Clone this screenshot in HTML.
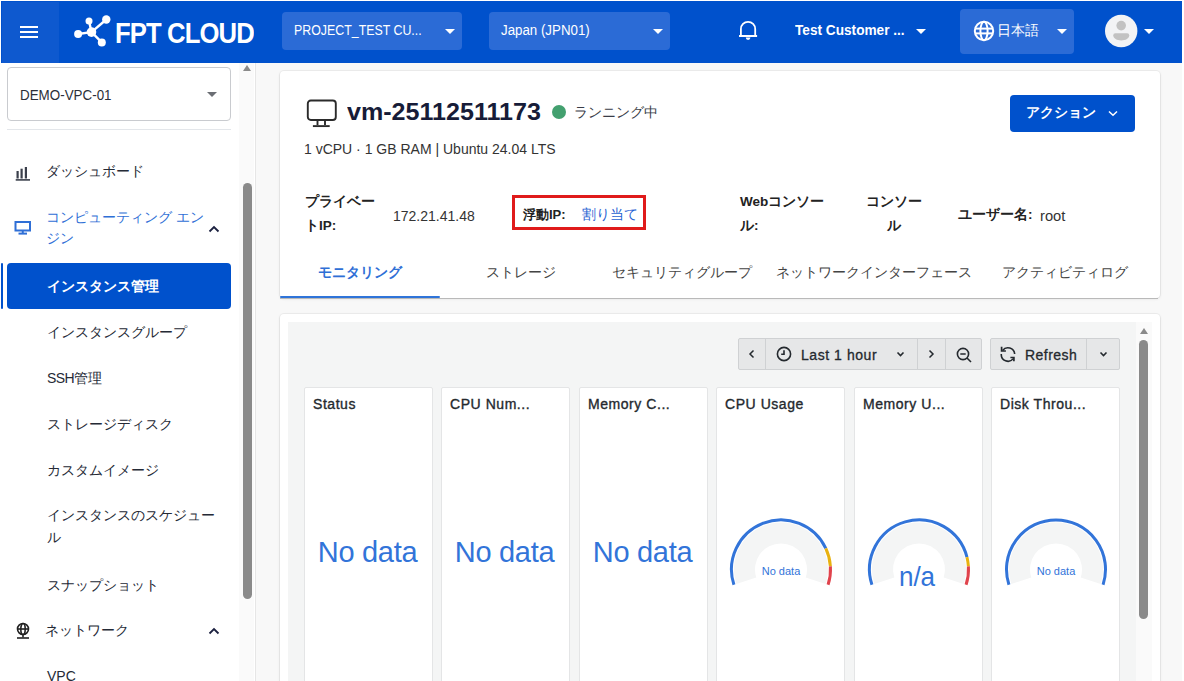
<!DOCTYPE html>
<html lang="ja">
<head>
<meta charset="utf-8">
<style>
*{box-sizing:border-box;margin:0;padding:0}
html,body{width:1184px;height:681px;overflow:hidden;background:#fff;font-family:"Liberation Sans",sans-serif;color:#333}
.a{position:absolute;white-space:nowrap}
.t{line-height:1}
#hdr{position:absolute;left:1px;top:1px;width:1181px;height:62px;background:#0051cc;z-index:5}
#ham{position:absolute;left:0;top:0;width:58px;height:62px;background:#0e59cf;border-top:1px solid #0051cc;border-left:1px solid #0051cc}
.hl{position:absolute;left:17.5px;width:18px;height:2px;background:#fff}
.dd{position:absolute;background:#2b6bd6;border-radius:4px}
.tri{position:absolute;width:0;height:0;border-left:5px solid transparent;border-right:5px solid transparent;border-top:5px solid #fff}
.w{color:#fff}
#side{position:absolute;left:0;top:62px;width:255px;height:619px;background:#fff;z-index:2}
#main{position:absolute;left:255px;top:62px;width:927px;height:619px;background:#f8f8f8}
.card{position:absolute;background:#fff;border-radius:4px;box-shadow:0 0 0 1px rgba(0,0,0,.045),0 1px 3px rgba(0,0,0,.1)}
.nav{position:absolute;left:47px;font-size:14px;line-height:1;color:#252a36}
.panel{position:absolute;top:387px;width:129px;height:300px;background:#fff;border:1px solid #e4e5e6;border-radius:2px}
.ptitle{position:absolute;left:8px;top:9.2px;font-size:14px;line-height:1;color:#24292e;-webkit-text-stroke:0.35px #24292e;letter-spacing:0.55px}
.nodata{position:absolute;left:-1px;width:100%;text-align:center;top:150px;font-size:29px;line-height:1;color:#3274d9;letter-spacing:-0.3px}
.btn{position:absolute;background:#e6e7e8;border:1px solid #cfd1d3;border-radius:2px}
</style>
</head>
<body>
<!-- HEADER -->
<div id="hdr">
  <div id="ham">
    <div class="hl" style="top:23.5px"></div>
    <div class="hl" style="top:28.5px"></div>
    <div class="hl" style="top:33.5px"></div>
  </div>
  <svg class="a" style="left:71px;top:13px" width="40" height="34" viewBox="0 0 40 34">
    <g stroke="#fff" stroke-width="2.4" fill="none">
      <line x1="19.5" y1="18.1" x2="6.1" y2="20.05"/>
      <line x1="19.5" y1="18.1" x2="17" y2="6.9"/>
      <line x1="19.5" y1="18.1" x2="34.3" y2="5.5"/>
      <line x1="19.5" y1="18.1" x2="29.8" y2="28.4"/>
    </g>
    <g fill="#fff">
      <circle cx="19.5" cy="18.1" r="4.8"/>
      <circle cx="6.1" cy="20.05" r="4"/>
      <circle cx="17" cy="6.9" r="3.5"/>
      <circle cx="34.3" cy="5.5" r="4.2"/>
      <circle cx="29.8" cy="28.4" r="4"/>
    </g>
  </svg>
  <div class="a t w" style="left:114px;top:18px;font-size:29px;font-weight:bold;letter-spacing:-1px;transform:scaleX(0.885);transform-origin:0 0">FPT CLOUD</div>

  <div class="dd" style="left:281px;top:11px;width:180px;height:38px"></div>
  <div class="a t w" style="left:293px;top:22px;font-size:14px;transform:scaleX(0.884);transform-origin:0 0">PROJECT_TEST CU...</div>
  <div class="tri" style="left:444px;top:28px"></div>

  <div class="dd" style="left:488px;top:11px;width:181px;height:38px"></div>
  <div class="a t w" style="left:500px;top:22px;font-size:14px;transform:scaleX(0.95);transform-origin:0 0">Japan (JPN01)</div>
  <div class="tri" style="left:652px;top:28px"></div>

  <svg class="a" style="left:736px;top:18px" width="22" height="22" viewBox="0 0 22 22">
    <path d="M3.9 17 V9.95 a7.15 7.15 0 0 1 14.3 0 V17" stroke="#fff" stroke-width="1.8" fill="none"/>
    <path d="M2 17 H20.1" stroke="#fff" stroke-width="2" fill="none"/>
    <path d="M8.8 18.6 H13.4 A2.3 2.3 0 0 1 8.8 18.6 Z" fill="#fff"/>
  </svg>
  <div class="a t w" style="left:794px;top:20.5px;font-size:15.5px;font-weight:bold;transform:scaleX(0.88);transform-origin:0 0">Test Customer ...</div>
  <div class="tri" style="left:915px;top:28px"></div>

  <div class="dd" style="left:959px;top:8px;width:114px;height:45px"></div>
  <svg class="a" style="left:972px;top:19px" width="22" height="22" viewBox="0 0 22 22">
    <g stroke="#fff" stroke-width="2" fill="none">
      <circle cx="11" cy="11" r="9.2"/>
      <ellipse cx="11" cy="11" rx="3.6" ry="9.2"/>
      <line x1="2" y1="8.6" x2="20" y2="8.6"/>
      <line x1="2" y1="13.4" x2="20" y2="13.4"/>
    </g>
  </svg>
  <div class="a t w" style="left:996px;top:22px;font-size:14px">日本語</div>
  <div class="tri" style="left:1056px;top:28px"></div>

  <svg class="a" style="left:1104px;top:13px" width="34" height="34" viewBox="0 0 34 34">
    <circle cx="16.2" cy="17" r="16.2" fill="#f2f3f5"/>
    <circle cx="16.2" cy="11.6" r="4.8" fill="#c2c2c2"/>
    <path d="M10.3 19.2 H22.2 A2 2 0 0 1 24.2 21.2 C24.2 24.5 20.6 26.4 16.25 26.4 C11.9 26.4 8.3 24.5 8.3 21.2 A2 2 0 0 1 10.3 19.2 Z" fill="#c2c2c2"/>
  </svg>
  <div class="tri" style="left:1143px;top:28px"></div>
</div>

<!-- SIDEBAR -->
<div id="side">
  <div class="a" style="left:7px;top:5px;width:224px;height:54px;border:1px solid #c9cbcf;border-radius:4px"></div>
  <div class="a t" style="left:20px;top:25px;font-size:15px;color:#2b2f38;transform:scaleX(0.893);transform-origin:0 0">DEMO-VPC-01</div>
  <div class="a" style="left:207px;top:30px;width:0;height:0;border-left:5px solid transparent;border-right:5px solid transparent;border-top:5px solid #6b6e74"></div>
  <div class="a" style="left:7px;top:67px;width:224px;height:1px;background:#e3e6ea"></div>

  <svg class="a" style="left:14px;top:104px" width="18" height="16" viewBox="0 0 18 15">
    <g fill="#3a3f4b"><rect x="2.5" y="4.5" width="2.2" height="7.5"/><rect x="6.5" y="2.2" width="2.2" height="9.8"/><rect x="10.8" y="0.5" width="2.2" height="11.5"/><rect x="1.7" y="12.6" width="14.3" height="1.6"/></g>
  </svg>
  <div class="nav" style="left:46px;top:101.5px">ダッシュボード</div>

  <svg class="a" style="left:13px;top:157px" width="20" height="16" viewBox="0 0 20 16">
    <g stroke="#2f6fd6" stroke-width="2" fill="none"><rect x="2.5" y="3" width="14.5" height="8.5"/><line x1="9.75" y1="11.5" x2="9.75" y2="14"/><line x1="5.5" y1="14.6" x2="14" y2="14.6"/></g>
  </svg>
  <div class="nav" style="left:46px;top:144.5px;color:#2f6fd6;line-height:21.5px">コンピューティング エン<br>ジン</div>
  <svg class="a" style="left:208px;top:162.5px" width="12" height="8" viewBox="0 0 12 8"><path d="M1.5 6.5 L6 2 L10.5 6.5" stroke="#1c2140" stroke-width="1.8" fill="none"/></svg>

  <div class="a" style="left:1px;top:200.5px;width:1.7px;height:46.3px;background:#0051cc;border-radius:1px"></div>
  <div class="a" style="left:7px;top:201px;width:224px;height:46px;background:#0051cc;border-radius:4px"></div>
  <div class="nav" style="top:217px;color:#fff;font-weight:bold">インスタンス管理</div>
  <div class="nav" style="top:263px">インスタンスグループ</div>
  <div class="nav" style="top:309px"><span style="letter-spacing:-0.6px">SSH</span>管理</div>
  <div class="nav" style="top:355px">ストレージディスク</div>
  <div class="nav" style="top:401px">カスタムイメージ</div>
  <div class="nav" style="top:443px;line-height:21.5px">インスタンスのスケジュー<br>ル</div>
  <div class="nav" style="top:516px">スナップショット</div>
  <svg class="a" style="left:14px;top:560px" width="18" height="18" viewBox="0 0 18 18">
    <g stroke="#222" stroke-width="1.6" fill="none"><circle cx="9" cy="7" r="5.5"/><ellipse cx="9" cy="7" rx="2.2" ry="5.5"/><line x1="3.5" y1="7" x2="14.5" y2="7"/><line x1="9" y1="12.5" x2="9" y2="15.5"/><line x1="3" y1="16" x2="15" y2="16"/></g>
  </svg>
  <div class="nav" style="left:45px;top:561px">ネットワーク</div>
  <svg class="a" style="left:207.5px;top:565px" width="12" height="8" viewBox="0 0 12 8"><path d="M1.5 6.5 L6 2 L10.5 6.5" stroke="#1c2140" stroke-width="1.8" fill="none"/></svg>
  <div class="nav" style="top:606.5px">VPC</div>

  <div class="a" style="left:239px;top:0;width:15px;height:619px;background:#fafafa"></div>
  <div class="a" style="left:255px;top:0;width:1px;height:619px;background:#e6e6e6"></div>
  <div class="a" style="left:243px;top:3px;width:0;height:0;border-left:4.5px solid transparent;border-right:4.5px solid transparent;border-bottom:6px solid #8a8a8a"></div>
  <div class="a" style="left:242.5px;top:120.5px;width:9px;height:416.5px;background:#8a8a8a;border-radius:5px"></div>
</div>

<!-- MAIN -->
<div id="main">
  <div class="card" style="left:25px;top:9px;width:880px;height:227px">
  </div>
  <div class="card" style="left:25px;top:252px;width:880px;height:400px">
  </div>
</div>

<!-- CARD1 CONTENT (page coords) -->
<div id="c1">
  <svg class="a" style="left:305px;top:98px" width="32" height="30" viewBox="0 0 32 30">
    <g stroke="#2b2b2b" stroke-width="1.9" fill="none" stroke-linejoin="round"><rect x="2.8" y="2.5" width="28" height="19.5" rx="3"/><line x1="12.5" y1="22" x2="12.5" y2="27"/><line x1="20" y1="22" x2="20" y2="27"/><line x1="7.9" y1="28.1" x2="24.7" y2="28.1"/></g>
  </svg>
  <div class="a t" style="left:347px;top:100px;font-size:24px;font-weight:bold;color:#171c38;transform:scaleX(1.045);transform-origin:0 0">vm-25112511173</div>
  <div class="a" style="left:552px;top:105px;width:14px;height:14px;border-radius:50%;background:#43a06f"></div>
  <div class="a t" style="left:574px;top:105px;font-size:14px;color:#3a3d48">ランニング中</div>
  <div class="a t" style="left:304px;top:142px;font-size:14px;color:#333">1 vCPU · 1 GB RAM | Ubuntu 24.04 LTS</div>

  <div class="a" style="left:305px;top:190px;font-size:13.5px;line-height:24px;font-weight:bold;color:#222">プライベー<br>トIP:</div>
  <div class="a t" style="left:393px;top:209px;font-size:14px;color:#333">172.21.41.48</div>
  <div class="a" style="left:511.5px;top:195px;width:134px;height:34.5px;border:3.6px solid #e01b1b"></div>
  <div class="a t" style="left:523px;top:208px;font-size:13px;font-weight:bold;color:#222">浮動IP:</div>
  <div class="a t" style="left:582px;top:207.3px;font-size:14px;color:#1f62d2">割り当て</div>

  <div class="a" style="left:740px;top:190px;font-size:13.5px;line-height:24px;font-weight:bold;color:#222">Webコンソー<br>ル:</div>
  <div class="a" style="left:866px;top:190px;font-size:13.5px;line-height:24px;font-weight:bold;color:#222;text-align:center">コンソー<br>ル</div>
  <div class="a t" style="left:958px;top:208px;font-size:13.5px;font-weight:bold;color:#222">ユーザー名:</div>
  <div class="a t" style="left:1040px;top:209px;font-size:14px;color:#333;transform:scaleX(1.05);transform-origin:0 0">root</div>

  <div class="a" style="left:1010px;top:95px;width:125px;height:37px;background:#0051cc;border-radius:4px"></div>
  <div class="a t w" style="left:1026.3px;top:105px;font-size:14px;font-weight:bold">アクション</div>
  <svg class="a" style="left:1106px;top:108px" width="14" height="10" viewBox="0 0 14 10"><path d="M3 3.5 L7 7.3 L11 3.5" stroke="#fff" stroke-width="1.5" fill="none"/></svg>

  <div class="a t" style="left:318px;top:265px;font-size:14px;font-weight:bold;color:#2f6fd6">モニタリング</div>
  <div class="a t" style="left:486px;top:265px;font-size:14px;color:#444">ストレージ</div>
  <div class="a t" style="left:612px;top:265px;font-size:14px;color:#444">セキュリティグループ</div>
  <div class="a t" style="left:776px;top:265px;font-size:14px;color:#444">ネットワークインターフェース</div>
  <div class="a t" style="left:1002px;top:265px;font-size:14px;color:#444">アクティビティログ</div>
  <div class="a" style="left:280px;top:297.5px;width:878px;height:1px;background:#b9b9b9"></div>
  <div class="a" style="left:279.5px;top:296px;width:160.5px;height:2.2px;background:#2f74d9;border-radius:1px"></div>
</div>

<!-- CARD2 CONTENT -->
<div id="c2">
  <div class="a" style="left:287.5px;top:322px;width:848.5px;height:360px;background:#f4f5f5"></div>

  <div class="btn" style="left:738px;top:338px;width:244px;height:32px"></div>
  <div class="a" style="left:765px;top:338px;width:1px;height:32px;background:#cfd1d3"></div>
  <div class="a" style="left:917px;top:338px;width:1px;height:32px;background:#cfd1d3"></div>
  <div class="a" style="left:945px;top:338px;width:1px;height:32px;background:#cfd1d3"></div>
  <svg class="a" style="left:747px;top:348px" width="10" height="12" viewBox="0 0 10 12"><path d="M6.5 2.5 L3 6 L6.5 9.5" stroke="#24292e" stroke-width="1.5" fill="none"/></svg>
  <svg class="a" style="left:776px;top:346px" width="16" height="16" viewBox="0 0 16 16"><circle cx="8" cy="8" r="6.6" stroke="#24292e" stroke-width="1.6" fill="none"/><path d="M8 4.2 V8.3 H5.2" stroke="#24292e" stroke-width="1.6" fill="none"/></svg>
  <div class="a t" style="left:801px;top:348px;font-size:14px;color:#24292e;letter-spacing:0.55px;-webkit-text-stroke:0.3px #24292e">Last 1 hour</div>
  <svg class="a" style="left:895px;top:349px" width="11" height="10" viewBox="0 0 11 10"><path d="M2.5 3.5 L5.5 6.5 L8.5 3.5" stroke="#24292e" stroke-width="1.6" fill="none"/></svg>
  <svg class="a" style="left:926px;top:348px" width="10" height="12" viewBox="0 0 10 12"><path d="M3.5 2.5 L7 6 L3.5 9.5" stroke="#24292e" stroke-width="1.5" fill="none"/></svg>
  <svg class="a" style="left:956px;top:347px" width="17" height="16" viewBox="0 0 17 16"><circle cx="7" cy="7" r="5.6" stroke="#24292e" stroke-width="1.6" fill="none"/><path d="M4.3 7 H9.7 M11 11 L15 15" stroke="#24292e" stroke-width="1.6" fill="none"/></svg>

  <div class="btn" style="left:990px;top:338px;width:130px;height:32px"></div>
  <div class="a" style="left:1086px;top:338px;width:1px;height:32px;background:#cfd1d3"></div>
  <svg class="a" style="left:999px;top:346px" width="18" height="17" viewBox="0 0 18 17"><path d="M3.58 4.56 A6.7 6.7 0 0 1 15.68 8.03 M2.3 8.0 A6.7 6.7 0 0 0 14.28 12.62" stroke="#24292e" stroke-width="1.6" fill="none"/><path d="M2.6 0.8 V5 H6.9 M11.4 11.5 H14.9 V15.2" stroke="#24292e" stroke-width="1.7" fill="none"/></svg>
  <div class="a t" style="left:1025px;top:348px;font-size:14px;color:#24292e;letter-spacing:0.45px;-webkit-text-stroke:0.3px #24292e">Refresh</div>
  <svg class="a" style="left:1098px;top:349px" width="11" height="10" viewBox="0 0 11 10"><path d="M2.5 3.5 L5.5 6.5 L8.5 3.5" stroke="#24292e" stroke-width="1.6" fill="none"/></svg>

  <div class="panel" style="left:304px"><div class="ptitle">Status</div><div class="nodata">No data</div></div>
  <div class="panel" style="left:441px"><div class="ptitle">CPU Num...</div><div class="nodata">No data</div></div>
  <div class="panel" style="left:579px"><div class="ptitle">Memory C...</div><div class="nodata">No data</div></div>
  <div class="panel" style="left:716px"><div class="ptitle">CPU Usage</div></div>
  <div class="panel" style="left:854px"><div class="ptitle">Memory U...</div></div>
  <div class="panel" style="left:991px"><div class="ptitle">Disk Throu...</div></div>

<svg class="a" style="left:0;top:0" width="1184" height="681" viewBox="0 0 1184 681">
<path d="M736.30 583.92 A47 47 0 1 1 825.70 583.92 L805.73 577.43 A26 26 0 1 0 756.27 577.43 Z" fill="#f4f5f5"/>
<path d="M733.92 584.70 A49.5 49.5 0 0 1 825.79 548.32" stroke="#3274d9" stroke-width="3" fill="none"/>
<path d="M825.79 548.32 A49.5 49.5 0 0 1 830.40 566.29" stroke="#e8b10f" stroke-width="3" fill="none"/>
<path d="M830.40 566.29 A49.5 49.5 0 0 1 828.08 584.70" stroke="#e0434c" stroke-width="3" fill="none"/>
<path d="M874.30 583.92 A47 47 0 1 1 963.70 583.92 L943.73 577.43 A26 26 0 1 0 894.27 577.43 Z" fill="#f4f5f5"/>
<path d="M871.92 584.70 A49.5 49.5 0 1 1 966.94 557.09" stroke="#3274d9" stroke-width="3" fill="none"/>
<path d="M966.94 557.09 A49.5 49.5 0 0 1 968.40 566.29" stroke="#e8b10f" stroke-width="3" fill="none"/>
<path d="M968.40 566.29 A49.5 49.5 0 0 1 966.08 584.70" stroke="#e0434c" stroke-width="3" fill="none"/>
<path d="M1011.30 583.92 A47 47 0 1 1 1100.70 583.92 L1080.73 577.43 A26 26 0 1 0 1031.27 577.43 Z" fill="#f4f5f5"/>
<path d="M1008.92 584.70 A49.5 49.5 0 1 1 1103.08 584.70" stroke="#3274d9" stroke-width="3" fill="none"/>
</svg>
  <div class="a t" style="left:731px;top:566px;width:100px;text-align:center;font-size:11px;color:#3274d9">No data</div>
  <div class="a t" style="left:866.5px;top:563px;width:100px;text-align:center;font-size:28px;color:#3274d9;transform:scaleX(0.93)">n/a</div>
  <div class="a t" style="left:1006px;top:566px;width:100px;text-align:center;font-size:11px;color:#3274d9">No data</div>

  <div class="a" style="left:1136px;top:322px;width:16px;height:367px;background:#fafafa"></div>
  <div class="a" style="left:1140px;top:328px;width:0;height:0;border-left:4.5px solid transparent;border-right:4.5px solid transparent;border-bottom:6px solid #8a8a8a"></div>
  <div class="a" style="left:1139.4px;top:339.8px;width:9px;height:279px;background:#8a8a8a;border-radius:5px"></div>
</div>
</body>
</html>
